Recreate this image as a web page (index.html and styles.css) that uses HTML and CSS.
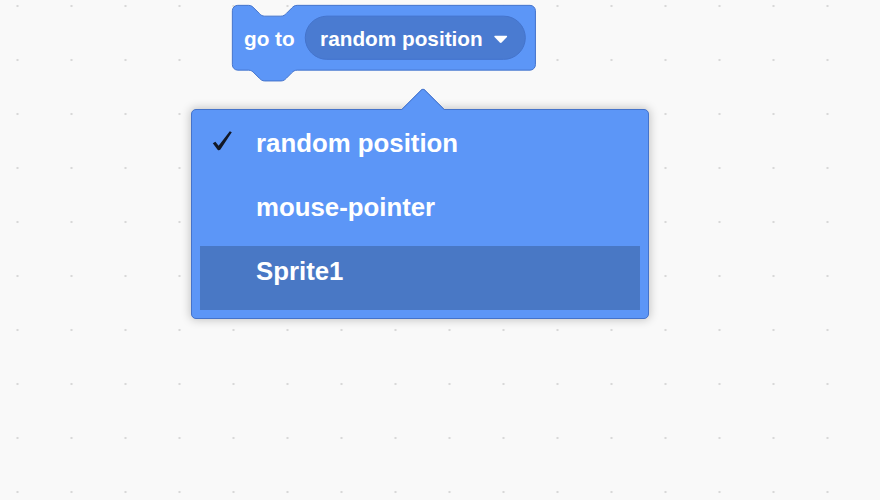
FILE: index.html
```html
<!DOCTYPE html>
<html lang="en">
<head>
<meta charset="utf-8">
<title>go to block</title>
<link rel="stylesheet" href="styles.css">
</head>
<body>
<div class="workspace">
  <svg class="block" viewBox="-1 -1 228 60" width="307.8" height="81" aria-label="go to block">
    <path class="block-body" d="M 0 4 A 4 4 0 0 1 4 0 H 12 c 2 0 3 1 4 2 l 4 4 c 1 1 2 2 4 2 h 12 c 2 0 3 -1 4 -2 l 4 -4 c 1 -1 2 -2 4 -2 H 220.5 a 4 4 0 0 1 4 4 v 40 a 4 4 0 0 1 -4 4 H 48 c -2 0 -3 1 -4 2 l -4 4 c -1 1 -2 2 -4 2 h -12 c -2 0 -3 -1 -4 -2 l -4 -4 c -1 -1 -2 -2 -4 -2 H 4 a 4 4 0 0 1 -4 -4 z"/>
    <text class="block-label" x="8.6" y="30">go to</text>
    <rect class="pill" x="54" y="8" width="163" height="32" rx="16" ry="16"/>
    <text class="block-label" x="65" y="30">random position</text>
    <path class="pill-arrow" d="M 194.6 22.6 H 203 Q 204 22.6 203.4 23.5 L 199.5 27.6 Q 198.8 28.3 198.1 27.6 L 194.2 23.5 Q 193.6 22.6 194.6 22.6 z"/>
  </svg>

  <div class="menu">
    <div class="menu-arrow"><div class="menu-arrow-square"></div></div>
    <div class="menu-item">
      <span class="check-slot">
        <svg class="check" viewBox="0 0 20 20" width="20" height="20" aria-hidden="true">
          <path d="M0.8 12.2 L3.4 10.8 L6.6 14.8 L17.8 0.2 L19.8 1.2 L8.4 18.6 Q7 19.9 5.6 18.8 Z"/>
        </svg>
      </span>
      <span class="item-label">random position</span>
    </div>
    <div class="menu-item">
      <span class="check-slot"></span>
      <span class="item-label">mouse-pointer</span>
    </div>
    <div class="menu-item menu-item-highlight">
      <span class="check-slot"></span>
      <span class="item-label">Sprite1</span>
    </div>
  </div>
</div>
</body>
</html>
```

FILE: styles.css
```css
html, body {
  margin: 0;
  padding: 0;
}

body {
  width: 880px;
  height: 500px;
  overflow: hidden;
  background-color: #f9f9f9;
  background-image: radial-gradient(circle, #d8d8d8 0, #d8d8d8 0.9px, rgba(249, 249, 249, 0) 1.6px);
  background-size: 54px 54px;
  background-position: -9.5px -21px;
  font-family: "Liberation Sans", Arial, Helvetica, sans-serif;
}

.workspace {
  position: relative;
  width: 880px;
  height: 500px;
}

/* the block sits on the free workspace canvas */
.block {
  position: absolute;
  left: 230.65px;
  top: 3.65px;
  overflow: visible;
}

.block-body {
  fill: #5c96f7;
  stroke: #4473cb;
  stroke-width: 0.74;
}

.pill {
  fill: #4a7bd1;
  stroke: #4473cb;
  stroke-width: 0.74;
}

.block-label {
  fill: #ffffff;
  font-family: "Liberation Sans", Arial, Helvetica, sans-serif;
  font-weight: 700;
  font-size: 15.4px;
}

.pill-arrow {
  fill: #ffffff;
}

/* dropdown menu floating over the canvas */
.menu {
  position: absolute;
  left: 191px;
  top: 109px;
  width: 458px;
  height: 210px;
  box-sizing: border-box;
  padding: 8px;
  border: 1px solid #4473cb;
  border-radius: 5px;
  background: #5c96f7;
  box-shadow: 0 0 10px 1px rgba(0, 0, 0, 0.22);
  display: flex;
  flex-direction: column;
}

.menu-arrow {
  position: absolute;
  left: 208px;
  top: -24px;
  width: 46px;
  height: 24px;
  overflow: hidden;
}

.menu-arrow-square {
  position: absolute;
  left: 7px;
  top: 7.5px;
  width: 32px;
  height: 32px;
  box-sizing: border-box;
  background: #5c96f7;
  border-top: 1px solid #4473cb;
  border-left: 1px solid #4473cb;
  border-top-left-radius: 4px;
  transform: rotate(45deg);
}

.menu-item {
  height: 64px;
  box-sizing: border-box;
  padding-top: 10px;
  display: flex;
  align-items: flex-start;
  color: #ffffff;
}

.menu-item-highlight {
  background: rgba(0, 0, 0, 0.2);
}

.check-slot {
  width: 56px;
  flex: none;
  display: flex;
  padding-left: 12px;
  padding-top: 3px;
  box-sizing: border-box;
}

.check {
  display: block;
  fill: #121826;
}

.item-label {
  font-weight: 700;
  font-size: 25.8px;
  line-height: 30px;
  white-space: nowrap;
}
```
